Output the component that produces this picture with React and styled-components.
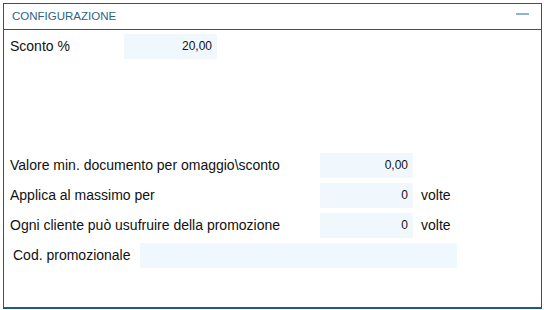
import styled, { createGlobalStyle } from "styled-components";

const GlobalStyle = createGlobalStyle`
  html, body {
    margin: 0;
    padding: 0;
    background: #fff;
  }
  body {
    font-family: "Liberation Sans", Arial, sans-serif;
    color: #111;
  }
`;

const Panel = styled.section`
  box-sizing: border-box;
  margin: 3px 2px 0 3px;
  width: 539px;
  height: 306px;
  border: 1px solid #1f5c76;
  border-bottom-width: 2px;
  display: flex;
  flex-direction: column;
`;

const Header = styled.header`
  box-sizing: border-box;
  height: 26px;
  border-bottom: 1px solid #1f5c76;
  display: flex;
  align-items: center;
  justify-content: space-between;
  padding: 0 12px 2px 8px;
`;

const Title = styled.h2`
  margin: 0;
  font-size: 11.5px;
  font-weight: normal;
  color: #2a6587;
  text-transform: uppercase;
`;

const Collapse = styled.span`
  display: block;
  width: 13px;
  height: 2px;
  background: #8fb4c8;
  margin-top: -4px;
`;

const Body = styled.div`
  padding: 3px 0 0 6px;
  display: flex;
  flex-direction: column;
`;

const Row = styled.div`
  display: flex;
  align-items: center;
  height: 25px;
  margin-top: ${(p) => p.$top || 5}px;
  font-size: 14px;
`;

const Label = styled.label`
  width: ${(p) => p.$width}px;
  padding-left: ${(p) => p.$indent || 0}px;
  box-sizing: border-box;
  white-space: nowrap;
  padding-bottom: 2px;
`;

const Field = styled.div`
  box-sizing: border-box;
  width: ${(p) => p.$width || 93}px;
  height: 25px;
  background: #f0f8fd;
  text-align: right;
  font-size: 12px;
  padding: 0 5px 2px 0;
  display: flex;
  align-items: center;
  justify-content: flex-end;
`;

const Unit = styled.span`
  margin-left: 8px;
  padding-bottom: 2px;
`;

export default function App() {
  return (
    <>
      <GlobalStyle />
      <Panel>
        <Header>
          <Title>Configurazione</Title>
          <Collapse />
        </Header>
        <Body>
          <Row $top={1}>
            <Label $width={114}>Sconto %</Label>
            <Field>20,00</Field>
          </Row>
          <Row $top={94}>
            <Label $width={310}>Valore min. documento per omaggio\sconto</Label>
            <Field>0,00</Field>
          </Row>
          <Row>
            <Label $width={310}>Applica al massimo per</Label>
            <Field>0</Field>
            <Unit>volte</Unit>
          </Row>
          <Row>
            <Label $width={310}>Ogni cliente può usufruire della promozione</Label>
            <Field>0</Field>
            <Unit>volte</Unit>
          </Row>
          <Row>
            <Label $width={130} $indent={3}>Cod. promozionale</Label>
            <Field $width={317} />
          </Row>
        </Body>
      </Panel>
    </>
  );
}
